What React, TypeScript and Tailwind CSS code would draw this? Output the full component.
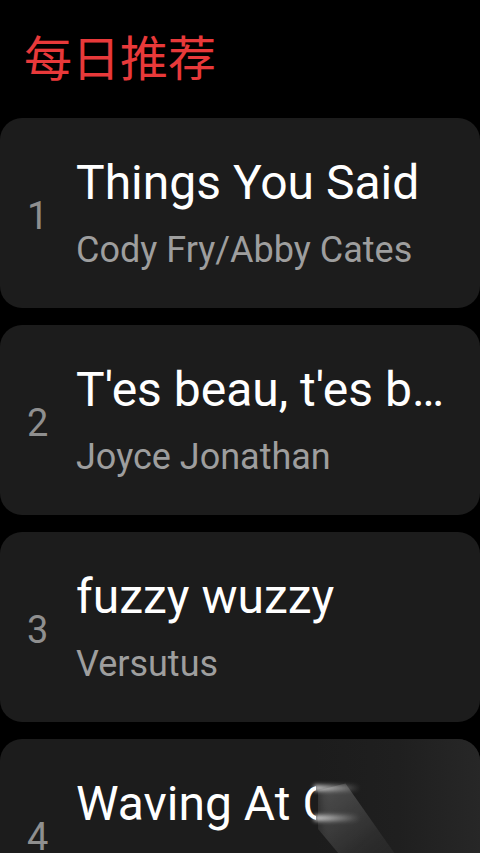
import React from "react";

const songs = [
  { n: 1, title: "Things You Said", artist: "Cody Fry/Abby Cates" },
  { n: 2, title: "T'es beau, t'es bizarre", artist: "Joyce Jonathan" },
  { n: 3, title: "fuzzy wuzzy", artist: "Versutus" },
];

function Card({ n, title, artist }: { n: number; title: string; artist: string }) {
  return (
    <div className="flex items-center h-[190px] w-full rounded-[22px] bg-[#1c1c1c] shrink-0">
      <div className="w-[76px] shrink-0 pl-[27px] text-[38px] leading-none text-[#8f8f8f] pt-[6px]">{n}</div>
      <div className="flex flex-col min-w-0 flex-1 pr-[32px]">
        <div className="text-[48px] leading-[56px] text-white truncate">{title}</div>
        <div className="text-[36px] leading-[44px] text-[#9e9e9e] truncate mt-[17px]">{artist}</div>
      </div>
    </div>
  );
}

export default function App() {
  return (
    <div
      className="w-[480px] h-[853px] bg-black overflow-hidden flex flex-col"
      style={{ fontFamily: "Roboto, 'Noto Sans CJK SC', sans-serif" }}
    >
      <div className="h-[118px] shrink-0 pl-[24px] pt-[30px] text-[48px] leading-[60px] text-[#e8393a]">每日推荐</div>
      <div className="flex flex-col gap-[17px]">
        {songs.map((s) => (
          <Card key={s.n} {...s} />
        ))}
        <div className="relative flex items-center h-[190px] w-full rounded-[22px] bg-[#1c1c1c] shrink-0 overflow-hidden">
          <div className="w-[76px] shrink-0 pl-[27px] text-[38px] leading-none text-[#8f8f8f] pt-[6px]">4</div>
          <div className="flex flex-col min-w-0 flex-1 pr-[32px]">
            <div className="text-[48px] leading-[56px] text-white whitespace-nowrap">Waving At Cars</div>
            <div className="text-[36px] leading-[44px] text-[#9e9e9e] truncate mt-[17px]">Isaac Dunbar</div>
          </div>
          <div className="absolute left-[316px] top-0 right-0 bottom-0 bg-gradient-to-r from-[#1c1c1c] via-[#1f1f1f] to-[#272727]" />
          <div className="absolute left-[314px] top-[46px] w-[46px] h-[6px] blur-[2px] bg-gradient-to-r from-white/80 to-transparent" />
          <div className="absolute left-[314px] top-[76px] w-[46px] h-[6px] blur-[2px] bg-gradient-to-r from-white/80 to-transparent" />
          <div
            className="absolute left-[318px] top-[42px] w-[110px] h-[120px] blur-[6px] opacity-30"
            style={{
              background: "linear-gradient(140deg, rgba(255,255,255,0.8) 0%, rgba(255,255,255,0.2) 50%, rgba(255,255,255,0) 100%)",
              clipPath: "polygon(0 8%, 25% 2%, 100% 100%, 55% 100%, 0 40%)",
            }}
          />
        </div>
      </div>
    </div>
  );
}
